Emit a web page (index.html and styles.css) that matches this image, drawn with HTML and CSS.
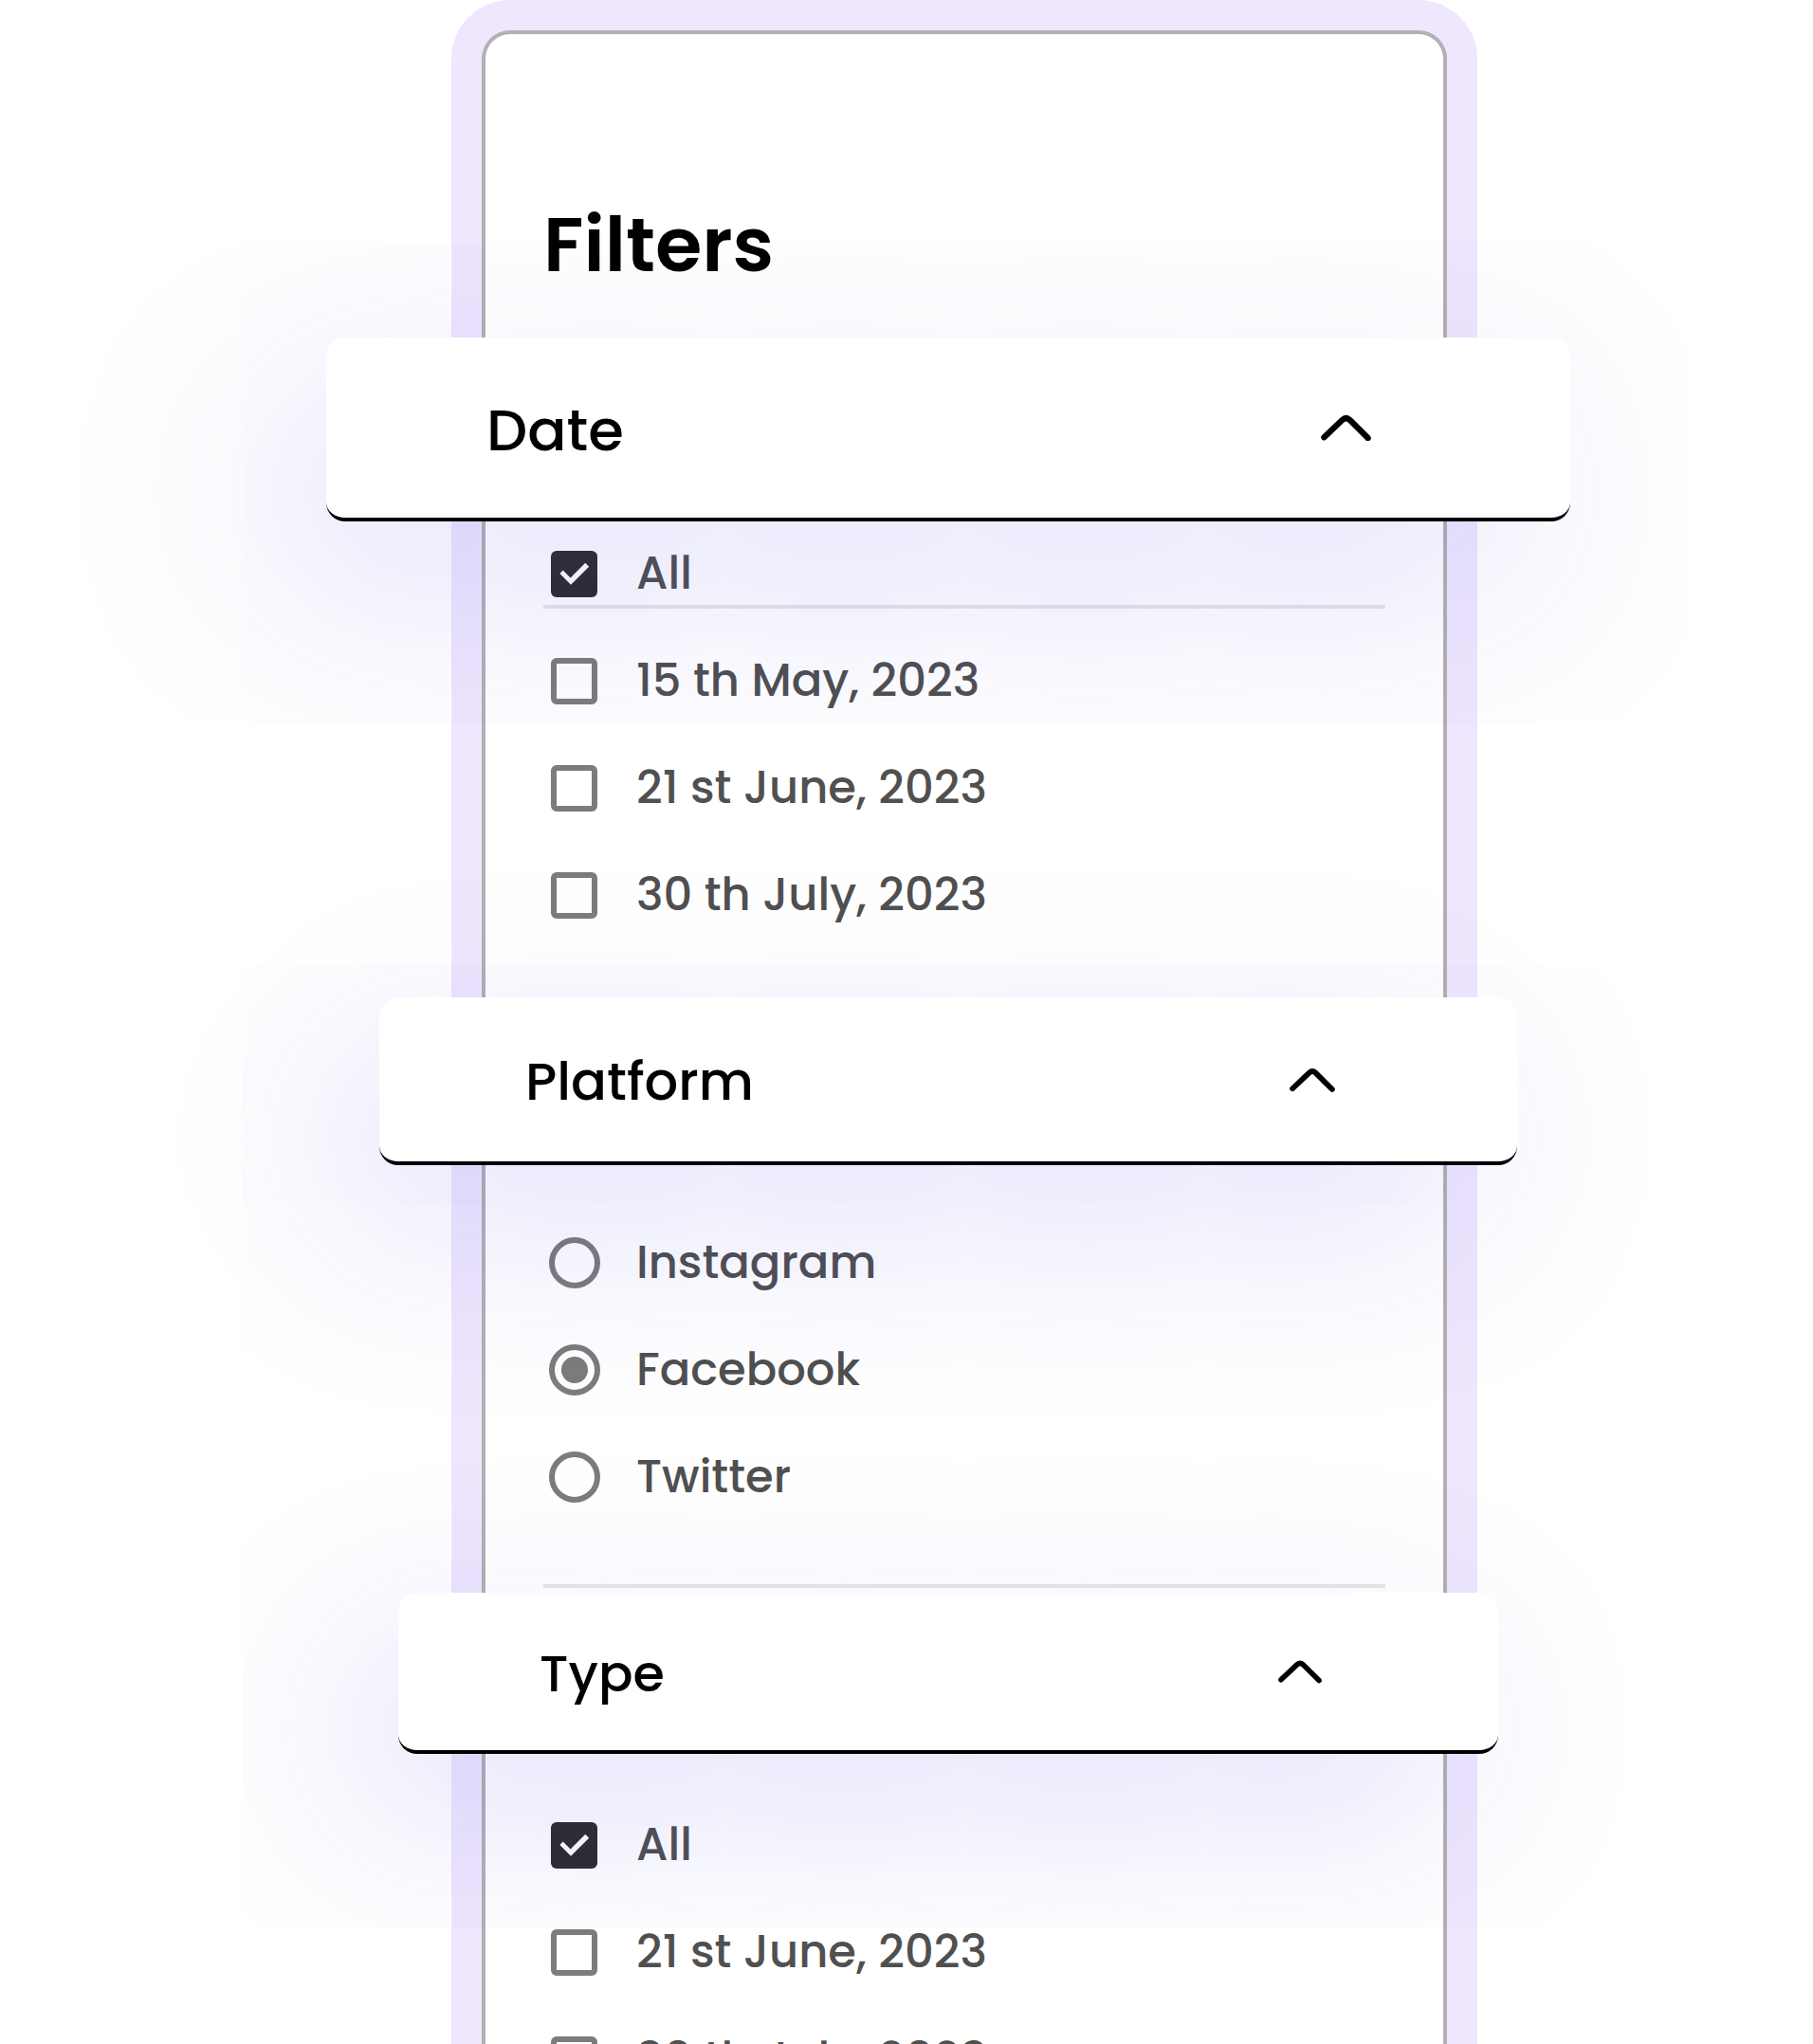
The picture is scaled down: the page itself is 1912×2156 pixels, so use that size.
FILE: index.html
```html
<!DOCTYPE html>
<html lang="en">
<head>
<meta charset="utf-8">
<meta name="viewport" content="width=device-width, initial-scale=1">
<title>Filters</title>
<link rel="stylesheet" href="styles.css">
</head>
<body>
<svg class="sprite" aria-hidden="true">
  <symbol id="chevron-up" viewBox="0 0 53 28">
    <path d="M3.4 24.2 L22.8 5.8 Q26.6 2.4 30.3 5.8 L49.6 25" fill="none" stroke="currentColor" stroke-width="6.4" stroke-linecap="round" stroke-linejoin="round"/>
  </symbol>
</svg>
<main class="stage">
  <form class="panel">
    <div class="panel-body">
      <h1 class="title">Filters</h1>

      <section class="group group-date">
        <h2 class="heading">
          <button class="toggle" type="button" aria-expanded="true">
            <span class="toggle-label">Date</span>
            <svg class="chevron" aria-hidden="true"><use href="#chevron-up"/></svg>
          </button>
        </h2>
        <div class="options">
          <label class="option option-ruled"><input class="check" type="checkbox" checked><span>All</span></label>
          <label class="option"><input class="check" type="checkbox"><span>15 th May, 2023</span></label>
          <label class="option"><input class="check" type="checkbox"><span>21 st June, 2023</span></label>
          <label class="option"><input class="check" type="checkbox"><span>30 th July, 2023</span></label>
        </div>
      </section>

      <section class="group group-platform">
        <h2 class="heading">
          <button class="toggle" type="button" aria-expanded="true">
            <span class="toggle-label">Platform</span>
            <svg class="chevron" aria-hidden="true"><use href="#chevron-up"/></svg>
          </button>
        </h2>
        <div class="options">
          <label class="option"><input class="radio" type="radio" name="platform"><span>Instagram</span></label>
          <label class="option"><input class="radio" type="radio" name="platform" checked><span>Facebook</span></label>
          <label class="option"><input class="radio" type="radio" name="platform"><span>Twitter</span></label>
        </div>
      </section>

      <section class="group group-type">
        <h2 class="heading">
          <button class="toggle" type="button" aria-expanded="true">
            <span class="toggle-label">Type</span>
            <svg class="chevron" aria-hidden="true"><use href="#chevron-up"/></svg>
          </button>
        </h2>
        <div class="options">
          <label class="option"><input class="check" type="checkbox" checked><span>All</span></label>
          <label class="option"><input class="check" type="checkbox"><span>21 st June, 2023</span></label>
          <label class="option"><input class="check" type="checkbox"><span>30 th July, 2023</span></label>
        </div>
      </section>
    </div>
  </form>
</main>
</body>
</html>
```

FILE: styles.css
```css
* { box-sizing: border-box; }

body {
  margin: 0;
  background: #fff;
  color: #000;
  font-family: Poppins, Inter, "Liberation Sans", sans-serif;
}

.sprite { display: none; }

.stage {
  display: grid;
  grid-template-columns: minmax(0, 476fr) minmax(0, 1082fr) minmax(0, 354fr);
  align-items: start;
  height: 100vh;
  overflow: hidden;
}

.panel {
  grid-column: 2;
  padding: 32px 32px 0;
  border-radius: 62px 62px 0 0;
  background: #efe7fd;
}

.panel-body {
  padding: 174px 61px 0;
  border: 4px solid #b1b1b1;
  border-bottom: 0;
  border-radius: 30px 30px 0 0;
  background: #fff;
}

.title {
  margin: 0 0 50px;
  font-size: 80px;
  font-weight: 600;
  line-height: 96px;
}

/* Section headers overhang the panel; their glow falls over the options. */
.heading {
  position: relative;
  z-index: 1;
  margin: 0 calc(-1 * var(--over-right)) 0 calc(-1 * var(--over-left));
}

.toggle {
  display: flex;
  align-items: center;
  justify-content: space-between;
  width: 100%;
  height: var(--bar);
  padding: 0 var(--pad-right) 0 var(--pad-left);
  border: 0;
  border-bottom: 4px solid #000;
  border-radius: 20px;
  background: #fff;
  box-shadow: var(--glow) rgba(54, 54, 228, 0.17);
  color: #000;
  font-family: inherit;
  font-size: var(--label);
  font-weight: 500;
  cursor: pointer;
}

.toggle-label { padding-top: 4px; }

.chevron {
  width: var(--chevron);
  height: 28px;
}

.options {
  display: flex;
  flex-direction: column;
  gap: 49px;
}

.option {
  display: grid;
  grid-template-columns: 65px 1fr;
  align-items: center;
  column-gap: 33px;
  height: 64px;
  color: #505050;
  font-size: 48px;
  font-weight: 500;
  line-height: 64px;
}

.option-ruled {
  height: 69px;
  margin-bottom: -5px;
  padding-bottom: 1px;
  border-bottom: 4px solid #e6e6e6;
}

.check,
.radio {
  appearance: none;
  display: grid;
  place-items: center;
  justify-self: center;
  margin: 0;
  border: 6px solid #7c7c7c;
}

.check {
  width: 49px;
  height: 49px;
  border-radius: 6px;
}

.check:checked {
  border: 0;
  background: #2d2d2d;
}

.check:checked::before {
  content: "";
  width: 49px;
  height: 49px;
  background: #fff;
  clip-path: polygon(19% 50%, 26% 43%, 42% 59%, 74% 27%, 82% 35%, 43% 74%);
}

.radio {
  width: 54px;
  height: 54px;
  border-radius: 50%;
}

.radio:checked::before {
  content: "";
  width: 28px;
  height: 28px;
  border-radius: 50%;
  background: #7c7c7c;
}

.group-date {
  --over-left: 229px;
  --over-right: 195px;
  --bar: 194px;
  --pad-left: 169px;
  --pad-right: 210px;
  --label: 61px;
  --chevron: 53px;
  --glow: -54px 66px 236px;
}

.group-date .options { padding: 23px 0 76px; }

.group-platform {
  --over-left: 173px;
  --over-right: 139px;
  --bar: 177px;
  --pad-left: 154px;
  --pad-right: 192px;
  --label: 56px;
  --chevron: 48px;
  --glow: -49px 60px 216px;
}

.group-platform .options {
  margin-bottom: 5px;
  padding: 71px 0 81px;
  border-bottom: 4px solid #e6e6e6;
}

.group-type {
  --over-left: 153px;
  --over-right: 119px;
  --bar: 170px;
  --pad-left: 149px;
  --pad-right: 186px;
  --label: 54px;
  --chevron: 46px;
  --glow: -48px 58px 208px;
}

.group-type .options { padding: 64px 0 80px; }
```
